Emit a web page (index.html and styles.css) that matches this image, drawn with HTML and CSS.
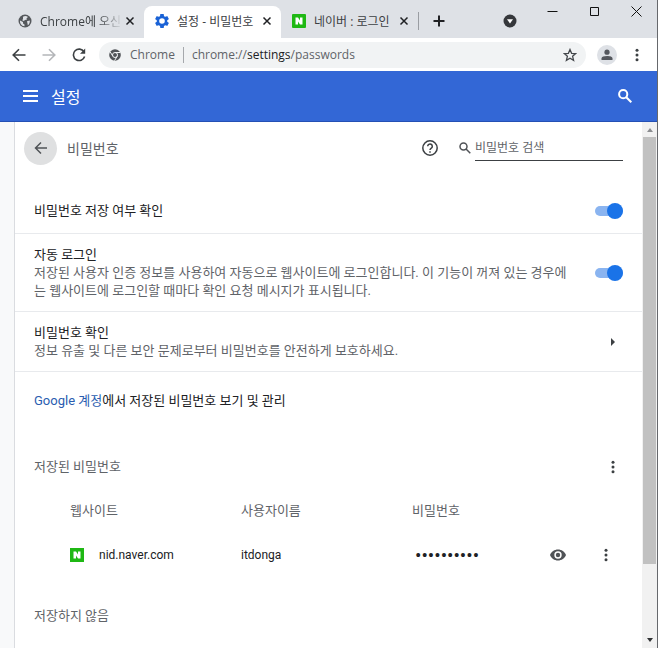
FILE: index.html
```
<!DOCTYPE html>
<html lang="ko">
  <head>
    <meta charset="UTF-8">
    <meta name="viewport" content="width=device-width, initial-scale=1.0">
    <title>설정 - 비밀번호</title>
    <link rel="stylesheet" href="styles.css">
  </head>
  <body>
    <div class="browser">
      <!-- Tab strip -->
      <div class="tab-strip">
        <div class="tab tab-first">
          <svg class="favicon" viewBox="0 0 14 14">
            <circle cx="7" cy="7" r="6.5" fill="#55585c"/>
            <path d="M2 6.500l3 1.500v1.500l1.500 1v1.800C3.500 12 1.800 9.500 2 6.500zM5 2.800c1.500-1 3.500-1 5 .2L8.500 4.200 9 5.500 7 6 5.800 7 4.200 6.200 5 5zM9 7.200l2.800-.7c.3 2-.6 3.800-2 4.800L9.500 9.500z" fill="#dee1e6"/>
          </svg>
          <span class="tab-title fade">Chrome에 오신</span>
          <button class="tab-close" aria-label="닫기">
            <svg viewBox="0 0 10 10"><path d="M1.500 1.500l7 7M8.500 1.500l-7 7"/></svg>
          </button>
        </div>
        <div class="tab active">
          <svg class="favicon" viewBox="2 2 20 20">
            <path fill="#1a62d6" d="M19.430 12.980c.04-.32.07-.64.07-.98s-.03-.66-.07-.98l2.110-1.650c.19-.15.24-.42.12-.64l-2-3.460c-.12-.22-.39-.3-.61-.22l-2.490 1c-.52-.4-1.080-.73-1.690-.98l-.38-2.650C14.460 2.180 14.250 2 14 2h-4c-.25 0-.46.18-.49.42l-.38 2.650c-.61.25-1.170.59-1.690.98l-2.490-1c-.23-.09-.49 0-.61.22l-2 3.460c-.13.22-.07.49.12.64l2.110 1.650c-.04.32-.07.65-.07.98s.03.66.07.98l-2.110 1.650c-.19.15-.24.42-.12.64l2 3.460c.12.22.39.3.61.22l2.490-1c.52.4 1.080.73 1.690.98l.38 2.650c.03.24.24.42.49.42h4c.25 0 .46-.18.49-.42l.38-2.650c.61-.25 1.170-.59 1.690-.98l2.490 1c.23.09.49 0 .61-.22l2-3.460c.12-.22.07-.49-.12-.64zM12 16a4 4 0 1 1 0-8 4 4 0 0 1 0 8z"/>
          </svg>
          <span class="tab-title">설정 - 비밀번호</span>
          <button class="tab-close" aria-label="닫기">
            <svg viewBox="0 0 10 10"><path d="M1.500 1.500l7 7M8.500 1.500l-7 7"/></svg>
          </button>
        </div>
        <div class="tab">
          <svg class="favicon" viewBox="0 0 14 14">
            <rect width="14" height="14" rx="1" fill="#1fb814"/>
            <path d="M3.500 3.500h2.500l2 3v-3h2.500v7H8l-2-3v3H3.500z" fill="#fff"/>
          </svg>
          <span class="tab-title">네이버 : 로그인</span>
          <button class="tab-close" aria-label="닫기">
            <svg viewBox="0 0 10 10"><path d="M1.500 1.500l7 7M8.500 1.500l-7 7"/></svg>
          </button>
        </div>
        <button class="new-tab" aria-label="새 탭">
          <svg viewBox="0 0 12 12"><path d="M6 .5v11M.5 6h11"/></svg>
        </button>
        <div class="window-controls">
          <button class="tab-search" aria-label="탭 검색">
            <svg viewBox="0 0 14 14"><circle cx="7" cy="7" r="6.500" fill="#35373b"/><path d="M4 5.300h6L7 9.500z" fill="#fff"/></svg>
          </button>
          <button aria-label="최소화"><svg viewBox="0 0 11 11"><path d="M.5 5.500h10"/></svg></button>
          <button aria-label="최대화"><svg viewBox="0 0 11 11"><path d="M1.500 1.500h8v8h-8z"/></svg></button>
          <button aria-label="창 닫기"><svg viewBox="0 0 11 11"><path d="M.5.5l10 10M10.500.5l-10 10"/></svg></button>
        </div>
      </div>

      <!-- Toolbar -->
      <div class="toolbar">
        <button class="nav-btn" aria-label="뒤로"><svg viewBox="0 0 14 14"><path d="M13.500 7H1.500M7 1.200L1.200 7 7 12.800"/></svg></button>
        <button class="nav-btn disabled" aria-label="앞으로"><svg viewBox="0 0 14 14"><path d="M.5 7h12M7 1.200L12.800 7 7 12.800"/></svg></button>
        <button class="nav-btn" aria-label="새로고침"><svg viewBox="0 0 14 14"><path d="M12 3.800A5.700 5.700 0 1 0 12.600 8.500"/><path d="M13.200.6v5.200H8z" class="solid"/></svg></button>
        <div class="omnibox">
          <svg class="site-icon" viewBox="0 0 12 12">
            <circle cx="6" cy="6" r="5.800" fill="#505357"/>
            <circle cx="6" cy="6" r="2.500" fill="#505357" stroke="#f1f3f4"/>
            <path d="M6 3.500h5.300M3.800 7.200L1.200 2.900M8.200 7.200l-2.700 4.500" stroke="#f1f3f4" fill="none"/>
          </svg>
          <span class="site-name">Chrome</span>
          <span class="url">chrome://<b>settings</b>/passwords</span>
          <button class="star" aria-label="북마크">
            <svg viewBox="0 0 14 14"><path d="M7 1.500l1.600 3.800 4.100.3-3.100 2.700 1 4L7 10.200l-3.600 2.100 1-4L1.300 5.600l4.100-.3z"/></svg>
          </button>
        </div>
        <button class="avatar" aria-label="프로필">
          <svg viewBox="0 0 12 12"><circle cx="6" cy="3.200" r="2.600"/><path d="M.5 11V9.500C.5 7.700 3 7 6 7s5.500.7 5.500 2.500V11z"/></svg>
        </button>
        <button class="dots-btn" aria-label="메뉴"><svg viewBox="0 0 4 14"><circle cx="2" cy="2.200" r="1.500"/><circle cx="2" cy="7" r="1.500"/><circle cx="2" cy="11.800" r="1.500"/></svg></button>
      </div>

      <!-- Settings header -->
      <header class="settings-header">
        <button class="menu-btn" aria-label="기본 메뉴"><svg viewBox="0 0 15 12"><path d="M0 1h15M0 6h15M0 11h15"/></svg></button>
        <h1>설정</h1>
        <button class="header-search" aria-label="설정 검색"><svg viewBox="0 0 14 14"><circle cx="5.200" cy="5.200" r="4.100"/><path d="M8.300 8.300l5 5"/></svg></button>
      </header>

      <div class="page">
        <main class="card">
          <div class="card-top">
            <button class="back" aria-label="뒤로"><svg viewBox="0 0 14 14"><path d="M13 7H1.800M7 1.500L1.500 7 7 12.500"/></svg></button>
            <h2>비밀번호</h2>
            <button class="help" aria-label="도움말">
              <svg viewBox="0 0 16 16"><circle cx="8" cy="8" r="7.200"/><path d="M5.700 6.300a2.300 2.300 0 1 1 3.600 1.900C8.400 8.800 8 9.200 8 10.100M8 11.200v1.500"/></svg>
            </button>
            <label class="search">
              <svg viewBox="0 0 12 12"><circle cx="4.500" cy="4.500" r="3.500"/><path d="M7 7l4.300 4.300"/></svg>
              <input type="search" placeholder="비밀번호 검색" aria-label="비밀번호 검색">
            </label>
          </div>

          <div class="row row-save">
            <label class="row-text" for="savePasswords">비밀번호 저장 여부 확인</label>
            <input class="toggle" type="checkbox" id="savePasswords" checked>
          </div>
          <div class="row row-auto">
            <label class="row-text" for="autoLogin">자동 로그인
              <span class="sub">저장된 사용자 인증 정보를 사용하여 자동으로 웹사이트에 로그인합니다. 이 기능이 꺼져 있는 경우에는 웹사이트에 로그인할 때마다 확인 요청 메시지가 표시됩니다.</span>
            </label>
            <input class="toggle" type="checkbox" id="autoLogin" checked>
          </div>
          <div class="row row-check">
            <div class="row-text">비밀번호 확인
              <span class="sub">정보 유출 및 다른 보안 문제로부터 비밀번호를 안전하게 보호하세요.</span>
            </div>
            <button class="arrow" aria-label="비밀번호 확인"><svg viewBox="0 0 4 8"><path d="M0 0l4 4-4 4z"/></svg></button>
          </div>
          <p class="account"><a href="#">Google 계정</a>에서 저장된 비밀번호 보기 및 관리</p>

          <div class="section-title">
            <h3>저장된 비밀번호</h3>
            <button class="dots-btn" aria-label="추가 작업"><svg viewBox="0 0 4 14"><circle cx="2" cy="2.200" r="1.500"/><circle cx="2" cy="7" r="1.500"/><circle cx="2" cy="11.800" r="1.500"/></svg></button>
          </div>
          <table class="passwords">
            <thead>
              <tr>
                <th class="col-name">웹사이트</th>
                <th class="col-name">사용자이름</th>
                <th>비밀번호</th>
                <th class="col-action"></th>
                <th class="col-action"></th>
              </tr>
            </thead>
            <tbody>
              <tr>
                <td>
                  <div class="site">
                    <svg viewBox="0 0 14 14"><rect width="14" height="14" fill="#1fb814"/><path d="M3.500 3.500h2.500l2 3v-3h2.500v7H8l-2-3v3H3.500z" fill="#fff"/></svg>
                    <span>nid.naver.com</span>
                  </div>
                </td>
                <td>itdonga</td>
                <td><input class="secret" type="password" value="0123456789" aria-label="비밀번호" readonly></td>
                <td class="action">
                  <button class="eye" aria-label="비밀번호 표시"><svg viewBox="0 0 16 12"><path fill-rule="evenodd" d="M8 .5C4.400.5 1.300 2.700 0 6c1.300 3.300 4.400 5.500 8 5.500s6.700-2.200 8-5.500C14.700 2.700 11.600.5 8 .5zM8 9.700a3.700 3.700 0 1 1 0-7.400 3.700 3.700 0 0 1 0 7.400z"/><circle cx="8" cy="6" r="2.200"/></svg></button>
                </td>
                <td class="action">
                  <button class="dots-btn" aria-label="추가 작업"><svg viewBox="0 0 4 14"><circle cx="2" cy="2.200" r="1.500"/><circle cx="2" cy="7" r="1.500"/><circle cx="2" cy="11.800" r="1.500"/></svg></button>
                </td>
              </tr>
            </tbody>
          </table>
          <h3 class="never">저장하지 않음</h3>
        </main>

        <div class="scrollbar">
          <svg class="muted" viewBox="0 0 6 4"><path d="M3 0l3 4H0z"/></svg>
          <div class="track"><div class="thumb"></div></div>
          <svg viewBox="0 0 6 4"><path d="M3 4l3-4H0z"/></svg>
        </div>
      </div>
    </div>
  </body>
</html>
```
FILE: styles.css
```
* {
  box-sizing: border-box;
}

body {
  margin: 0;
  font-family: Roboto, "Noto Sans CJK KR", sans-serif;
  font-size: 13px;
  color: #202124;
}

h1,
h2,
h3,
p {
  margin: 0;
  font-weight: 400;
}

button {
  display: flex;
  align-items: center;
  justify-content: center;
  flex: none;
  margin: 0;
  padding: 0;
  border: none;
  background: none;
  cursor: pointer;
}

svg {
  display: block;
  flex: none;
}

.browser {
  display: flex;
  flex-direction: column;
  height: 100vh;
  overflow: hidden;
  border-right: 1px solid #66686c;
}

/* Tab strip */
.tab-strip {
  display: flex;
  height: 38px;
  flex: none;
  padding-top: 6px;
  background-color: #dee1e6;
}

.tab {
  display: flex;
  align-items: center;
  flex: 0 1 137px;
  min-width: 0;
  padding: 0 8px 2px 11px;
  font-family: "Open Sans", "Noto Sans CJK KR", sans-serif;
  font-size: 12px;
  color: #3c4043;
}

.tab-first {
  flex-basis: 144px;
  padding-left: 18px;
}

.tab.active {
  background-color: #fff;
  border-radius: 8px 8px 0 0;
}

.favicon {
  width: 14px;
  height: 14px;
  margin-right: 8px;
}

.tab-title {
  flex: 1;
  overflow: hidden;
  white-space: nowrap;
}

.fade {
  -webkit-mask-image: linear-gradient(to right, #000 70%, transparent);
  mask-image: linear-gradient(to right, #000 70%, transparent);
}

.tab-close {
  width: 12px;
  height: 16px;
  margin-left: 1px;
}

.tab-close svg {
  width: 10px;
  height: 10px;
  stroke: #202124;
  stroke-width: 1.5;
}

.new-tab {
  width: 40px;
  height: 18px;
  margin-top: 6px;
  border-left: 1px solid #9a9da2;
}

.new-tab svg {
  width: 12px;
  height: 12px;
  stroke: #202124;
  stroke-width: 2;
}

.window-controls {
  display: flex;
  flex: 1;
  justify-content: flex-end;
  height: 11px;
}

.window-controls button {
  width: 42px;
}

.window-controls svg {
  width: 11px;
  height: 11px;
  fill: none;
  stroke: #111;
}

.window-controls .tab-search {
  height: 30px;
}

.window-controls .tab-search svg {
  width: 14px;
  height: 14px;
  stroke: none;
}

/* Toolbar */
.toolbar {
  display: flex;
  align-items: center;
  height: 33px;
  flex: none;
  padding: 0 10px 0 4px;
  background-color: #fff;
}

.nav-btn {
  width: 30px;
}

.nav-btn svg {
  width: 14px;
  height: 14px;
  fill: none;
  stroke: #3c4043;
  stroke-width: 1.6;
}

.nav-btn .solid {
  fill: #3c4043;
  stroke: none;
}

.disabled svg {
  stroke: #b4b6b9;
}

.omnibox {
  display: flex;
  align-items: center;
  flex: 1;
  height: 26px;
  margin-left: 5px;
  padding: 0 9px 0 10px;
  border-radius: 13px;
  background-color: #f1f3f4;
  font-family: "Open Sans", sans-serif;
  font-size: 12px;
  color: #5f6368;
}

.site-icon {
  width: 12px;
  height: 12px;
  margin-right: 9px;
}

.site-name {
  padding-right: 8px;
  border-right: 1px solid #a5a8ac;
  line-height: 16px;
}

.url {
  flex: 1;
  padding-left: 8px;
}

.url b {
  font-weight: 400;
  color: #202124;
}

.star svg {
  width: 14px;
  height: 14px;
  fill: none;
  stroke: #45484c;
  stroke-width: 1.3;
}

.avatar {
  width: 20px;
  height: 20px;
  margin: 0 10px 0 11px;
  border-radius: 50%;
  background-color: #dee1e6;
}

.avatar svg {
  width: 12px;
  height: 12px;
  fill: #55585e;
}

.dots-btn {
  width: 20px;
  height: 20px;
}

.dots-btn svg {
  width: 4px;
  height: 14px;
  fill: #3c4043;
}

/* Settings header */
.settings-header {
  display: flex;
  align-items: center;
  height: 51px;
  flex: none;
  padding: 0 25px 0 23px;
  border-bottom: 1px solid #2450b4;
  background-color: #3367d6;
  color: #fff;
}

.settings-header h1 {
  flex: 1;
  margin-left: 13px;
  font-size: 16px;
}

.settings-header svg {
  fill: none;
  stroke: #fff;
  stroke-width: 2;
}

.menu-btn svg {
  width: 15px;
  height: 12px;
}

.header-search svg {
  width: 14px;
  height: 14px;
}

/* Page */
.page {
  display: flex;
  flex: 1;
  min-height: 0;
  padding-left: 14px;
  background-color: #f8f9fa;
}

.card {
  flex: 1;
  min-width: 0;
  overflow: hidden;
  border-left: 1px solid #dadce0;
  background-color: #fff;
}

.card-top {
  display: flex;
  align-items: center;
  height: 52px;
  padding: 0 19px 0 9px;
}

.back {
  width: 33px;
  height: 33px;
  border-radius: 50%;
  background-color: #dfe0e1;
}

.back svg {
  width: 14px;
  height: 14px;
  fill: none;
  stroke: #505357;
  stroke-width: 1.5;
}

.card-top h2 {
  flex: 1;
  margin-left: 10px;
  font-size: 14px;
  color: #5f6368;
}

.help svg {
  width: 16px;
  height: 16px;
  fill: none;
  stroke: #3c4043;
  stroke-width: 1.5;
}

.search {
  display: flex;
  align-items: center;
  margin-left: 21px;
}

.search svg {
  width: 12px;
  height: 12px;
  margin-right: 4px;
  fill: none;
  stroke: #505357;
  stroke-width: 1.5;
}

.search input {
  width: 148px;
  height: 25px;
  padding: 0;
  border: none;
  border-bottom: 1px solid #3c4043;
  outline: none;
  background: none;
  font-family: inherit;
  font-size: 12px;
}

.search input::placeholder {
  color: #5f6368;
}

.row {
  display: flex;
  align-items: center;
  justify-content: space-between;
  padding: 0 19px;
  border-bottom: 1px solid #e8eaed;
  line-height: 18px;
}

.row-save {
  height: 46px;
  margin-top: 14px;
}

.row-auto {
  height: 78px;
}

.row-check {
  height: 60px;
}

.row-text {
  max-width: 540px;
}

.sub {
  display: block;
  color: #5f6368;
}

.toggle {
  position: relative;
  flex: none;
  width: 28px;
  height: 10px;
  margin: 0;
  border-radius: 5px;
  appearance: none;
  background-color: #8ab4f0;
  cursor: pointer;
}

.toggle::before {
  content: "";
  position: absolute;
  top: -3px;
  right: 0;
  width: 16px;
  height: 16px;
  border-radius: 50%;
  background-color: #1a73e8;
}

.toggle:not(:checked)::before {
  right: auto;
  left: 0;
}

.arrow {
  width: 20px;
  height: 20px;
}

.arrow svg {
  width: 4px;
  height: 8px;
  fill: #3c4043;
}

.account {
  padding: 20px 19px 0;
  line-height: 18px;
}

.account a {
  color: #2a5db0;
  text-decoration: none;
}

.section-title {
  display: flex;
  align-items: center;
  justify-content: space-between;
  margin-top: 47px;
  padding: 0 19px;
}

h3 {
  font-size: 13px;
  line-height: 18px;
  color: #5f6368;
}

.passwords {
  width: calc(100% - 67px);
  margin: 13px 12px 0 55px;
  border-collapse: collapse;
  table-layout: fixed;
}

.passwords th,
.passwords td {
  padding: 0;
  text-align: left;
}

.passwords th {
  height: 38px;
  font-weight: 400;
  color: #5f6368;
}

.passwords td {
  height: 54px;
  font-size: 12px;
}

.col-name {
  width: 171px;
}

.col-action {
  width: 48px;
}

.site {
  display: flex;
  align-items: center;
}

.site svg {
  width: 14px;
  height: 14px;
  margin-right: 15px;
}

.secret {
  width: 100%;
  padding: 0 3px;
  border: none;
  outline: none;
  background: none;
  font-family: Roboto, sans-serif;
  font-size: 19px;
  color: #202124;
}

.action button {
  margin: 0 auto;
}

.eye svg {
  width: 16px;
  height: 12px;
  fill: #505357;
}

.never {
  margin-top: 25px;
  padding: 0 19px;
}

/* Scrollbar */
.scrollbar {
  display: flex;
  flex-direction: column;
  align-items: center;
  flex: none;
  width: 15px;
  padding: 6px 0;
  background-color: #f1f1f1;
}

.scrollbar svg {
  width: 6px;
  height: 4px;
  fill: #303234;
}

.scrollbar .muted {
  fill: #8b8d90;
}

.track {
  flex: 1;
  width: 13px;
  margin: 5px 0;
}

.thumb {
  height: 86%;
  background-color: #c1c1c1;
}
```
